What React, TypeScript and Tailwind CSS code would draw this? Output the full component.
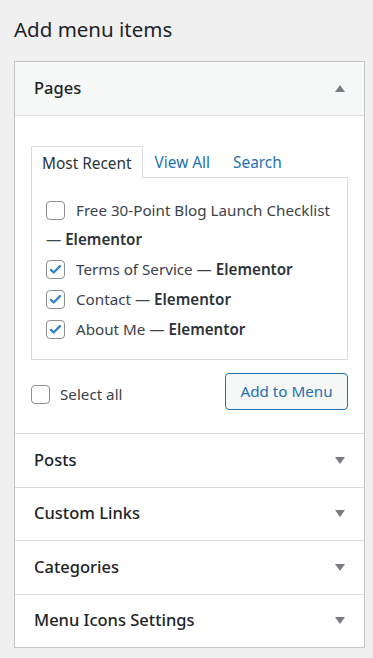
import React from "react";

const font = { fontFamily: '"Noto Sans", "Open Sans", sans-serif' };

function Box({ checked }: { checked?: boolean }) {
  return (
    <span className="inline-flex h-[19px] w-[19px] shrink-0 items-center justify-center rounded-[4px] border border-[#8c8f94] bg-white">
      {checked && (
        <svg width="15" height="15" viewBox="0 0 20 20">
          <path d="M4 10.5l3.6 3.6L16 5.5" fill="none" stroke="#3582c4" strokeWidth="3" strokeLinecap="round" strokeLinejoin="round" />
        </svg>
      )}
    </span>
  );
}

function Arrow({ up }: { up?: boolean }) {
  return (
    <svg width="10" height="7" viewBox="0 0 10 7">
      {up ? <path d="M5 0L10 7H0z" fill="#787c82" /> : <path d="M0 0H10L5 7z" fill="#787c82" />}
    </svg>
  );
}

function Section({ title }: { title: string }) {
  return (
    <div className="flex h-[53.5px] items-center justify-between border-t border-[#dcdcde] pl-[19px] pr-[19px]">
      <span className="text-[16.5px] font-medium text-[#1d2327]">{title}</span>
      <Arrow />
    </div>
  );
}

export default function App() {
  return (
    <div className="min-h-[658px] w-[373px] bg-[#f0f0f1] px-[14px] pt-[13px] pb-[10px]" style={font}>
      <h2 className="text-[20.5px] leading-[32px] font-normal text-[#1d2327]">Add menu items</h2>
      <div className="mt-[16px] w-[351px] border border-[#c3c4c7] bg-white">
        <div className="flex h-[54px] items-center justify-between border-b border-[#dcdcde] bg-[#f6f7f7] pl-[19px] pr-[19px]">
          <span className="text-[16.5px] font-medium text-[#1d2327]">Pages</span>
          <Arrow up />
        </div>
        <div className="px-[16px] pt-[30px] pb-[23px]">
          <div className="flex items-end text-[15.4px] leading-[20px]">
            <div className="relative z-10 -mb-px flex h-[32px] items-center border border-b-0 border-[#dcdcde] bg-white px-[10px] pt-[3px] text-[#2c3338]">
              Most Recent
            </div>
            <div className="flex h-[31px] items-center pl-[12px] pt-[3px] text-[#2271b1]">View All</div>
            <div className="flex h-[31px] items-center pl-[23px] pt-[3px] text-[#2271b1]">Search</div>
          </div>
          <div className="h-[183px] border border-[#dcdcde] px-[14px] pt-[21px] text-[15.2px] text-[#3c434a]">
            <div className="flex items-center gap-[11px] leading-[22px]">
              <Box />
              <span>Free 30-Point Blog Launch Checklist</span>
            </div>
            <div className="mt-[7px] leading-[22px]">
              — <b className="font-semibold text-[#2c3338]">Elementor</b>
            </div>
            <div className="mt-[8px] flex items-center gap-[11px] leading-[22px]">
              <Box checked />
              <span>
                Terms of Service — <b className="font-semibold text-[#2c3338]">Elementor</b>
              </span>
            </div>
            <div className="mt-[8px] flex items-center gap-[11px] leading-[22px]">
              <Box checked />
              <span>
                Contact — <b className="font-semibold text-[#2c3338]">Elementor</b>
              </span>
            </div>
            <div className="mt-[8px] flex items-center gap-[11px] leading-[22px]">
              <Box checked />
              <span>
                About Me — <b className="font-semibold text-[#2c3338]">Elementor</b>
              </span>
            </div>
          </div>
          <div className="mt-[13px] flex items-center justify-between">
            <div className="mt-[6px] flex items-center gap-[10px] text-[15.2px] text-[#3c434a]">
              <Box />
              <span>Select all</span>
            </div>
            <button className="h-[37px] w-[123px] rounded-[4px] border border-[#2271b1] bg-[#f6f7f7] text-[15.2px] text-[#2271b1]">
              Add to Menu
            </button>
          </div>
        </div>
        <Section title="Posts" />
        <Section title="Custom Links" />
        <Section title="Categories" />
        <Section title="Menu Icons Settings" />
      </div>
    </div>
  );
}
